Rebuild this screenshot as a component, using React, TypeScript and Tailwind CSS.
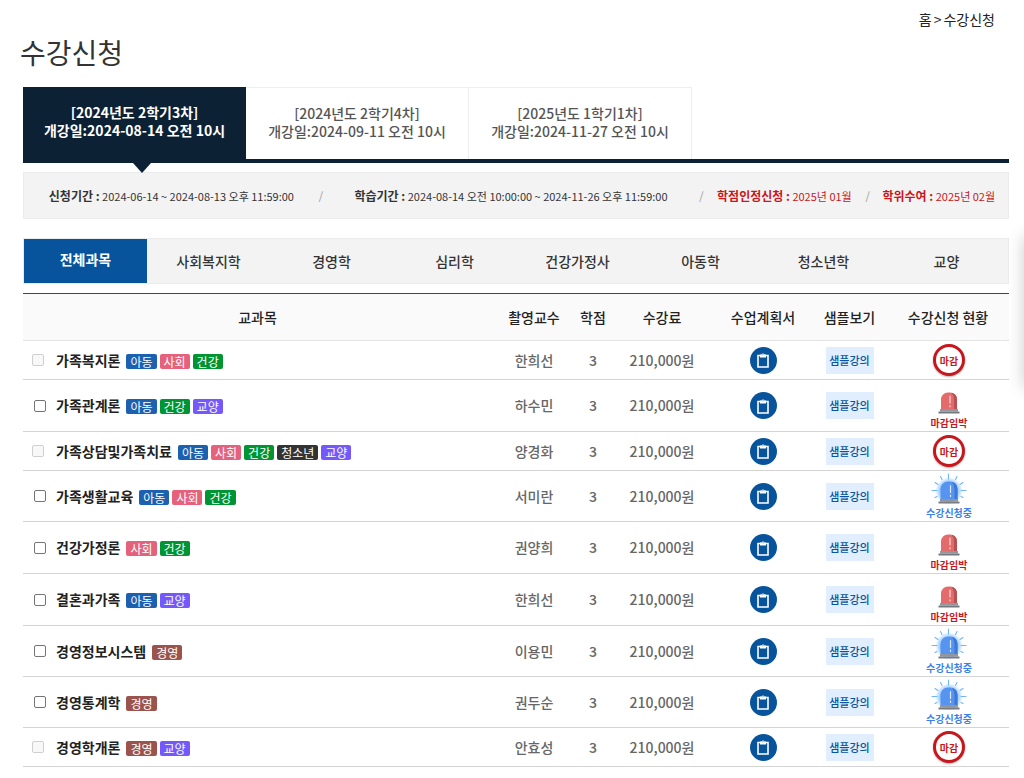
import { useState } from "react";
import clsx from "clsx";

type Status = "closed" | "closing" | "open";

type Course = {
  name: string;
  tags: string[];
  professor: string;
  status: Status;
};

const TERMS = [
  { title: "[2024년도 2학기3차]", start: "개강일:2024-08-14 오전 10시" },
  { title: "[2024년도 2학기4차]", start: "개강일:2024-09-11 오전 10시" },
  { title: "[2025년도 1학기1차]", start: "개강일:2024-11-27 오전 10시" },
];

const PERIODS = [
  { label: "신청기간 :", value: "2024-06-14 ~ 2024-08-13 오후 11:59:00", red: false },
  { label: "학습기간 :", value: "2024-08-14 오전 10:00:00 ~ 2024-11-26 오후 11:59:00", red: false },
  { label: "학점인정신청 :", value: "2025년 01월", red: true },
  { label: "학위수여 :", value: "2025년 02월", red: true },
];

const CATEGORIES = ["전체과목", "사회복지학", "경영학", "심리학", "건강가정사", "아동학", "청소년학", "교양"];

const TAG_COLORS: Record<string, string> = {
  아동: "bg-[#1c60b0]",
  사회: "bg-[#e5627c]",
  건강: "bg-[#009432]",
  교양: "bg-[#7558fb]",
  청소년: "bg-[#333333]",
  경영: "bg-[#9b544d]",
};

const COURSES: Course[] = [
  { name: "가족복지론", tags: ["아동", "사회", "건강"], professor: "한희선", status: "closed" },
  { name: "가족관계론", tags: ["아동", "건강", "교양"], professor: "하수민", status: "closing" },
  { name: "가족상담및가족치료", tags: ["아동", "사회", "건강", "청소년", "교양"], professor: "양경화", status: "closed" },
  { name: "가족생활교육", tags: ["아동", "사회", "건강"], professor: "서미란", status: "open" },
  { name: "건강가정론", tags: ["사회", "건강"], professor: "권양희", status: "closing" },
  { name: "결혼과가족", tags: ["아동", "교양"], professor: "한희선", status: "closing" },
  { name: "경영정보시스템", tags: ["경영"], professor: "이용민", status: "open" },
  { name: "경영통계학", tags: ["경영"], professor: "권두순", status: "open" },
  { name: "경영학개론", tags: ["경영", "교양"], professor: "안효성", status: "closed" },
];

export default function App() {
  const [term, setTerm] = useState(0);
  const [category, setCategory] = useState(0);

  return (
    <div className="relative overflow-hidden bg-white pr-[15px] pb-[10px] pl-[23px] font-['Noto_Sans_CJK_KR','Noto_Sans',sans-serif] text-[#333333]">
      <nav className="flex h-[33px] items-end justify-end gap-[2px] pr-[14px] text-[14px] leading-[28px] text-[#222222]">
        <a href="#home">홈</a>
        <span>&gt;</span>
        <a href="#apply">수강신청</a>
      </nav>
      <h1 className="-ml-[3px] h-[54px] text-[28px] leading-[38px]">수강신청</h1>

      <div className="flex border-b-4 border-[#0d2135]">
        {TERMS.map((t, i) => (
          <button
            key={t.title}
            type="button"
            onClick={() => setTerm(i)}
            className={clsx(
              "relative flex h-[72px] w-[223px] flex-col items-center justify-center border pb-1 text-[14px] leading-[18px]",
              term === i
                ? "border-[#0d2135] bg-[#0d2135] font-bold text-white"
                : "border-b-0 border-l-0 border-[#eeeeee] font-medium text-[#555555]",
            )}
          >
            <span>{t.title}</span>
            <span>{t.start}</span>
            {term === i && (
              <svg viewBox="0 0 18 10" className="absolute -bottom-[15px] left-[109px] h-[10px] w-[18px]" aria-hidden="true">
                <path d="M0 0h18L9 10z" fill="#0d2135" />
              </svg>
            )}
          </button>
        ))}
      </div>

      <div className="mt-[9px] grid h-[47px] grid-cols-[300fr_382fr_167fr_139fr] items-center border border-[#ebebeb] bg-[#f3f3f3] text-[11px]">
        {PERIODS.map((p, i) => (
          <div key={p.label} className={clsx("flex items-center whitespace-nowrap", p.red ? "text-[#c8161d]" : "text-[#333333]")}>
            <p className="flex-1 text-center">
              <strong className="text-[12px]">{p.label}</strong> {p.value}
            </p>
            {i < PERIODS.length - 1 && <span className="w-1 text-[#999999]">/</span>}
          </div>
        ))}
      </div>

      <div className="mt-[19px] grid h-[46px] grid-cols-8 border border-[#ebebeb] bg-[#f3f3f3] text-[14px]">
        {CATEGORIES.map((c, i) => (
          <button
            key={c}
            type="button"
            onClick={() => setCategory(i)}
            className={category === i ? "bg-[#07549c] pb-1 font-bold text-white" : "font-medium"}
          >
            {c}
          </button>
        ))}
      </div>

      <table className="mt-[9px] w-full table-fixed border-collapse border-t border-[#444444] text-center text-[14px]">
        <thead>
          <tr className="h-[47px] border-b border-[#e5e5e5] bg-[#fafafa] text-[#222222] *:font-medium *:whitespace-nowrap">
            <th>교과목</th>
            <th className="w-[84px]">촬영교수</th>
            <th className="w-[34px]">학점</th>
            <th className="w-[104px]">수강료</th>
            <th className="w-[98px]">수업계획서</th>
            <th className="w-[75px]">샘플보기</th>
            <th className="w-[122px]">수강신청 현황</th>
          </tr>
        </thead>
        <tbody>
          {COURSES.map((c) => (
            <CourseRow key={c.name} course={c} />
          ))}
        </tbody>
      </table>

      <aside className="absolute top-[236px] left-full h-[152px] w-[80px] bg-white shadow-[0_0_16px_rgba(0,0,0,0.2)]" />
    </div>
  );
}

function CourseRow({ course }: { course: Course }) {
  const closed = course.status === "closed";

  return (
    <tr
      className={clsx(
        "border-b border-[#d4d4d4] font-medium text-[#666666]",
        closed ? "h-[39px]" : course.status === "closing" ? "h-[52px]" : "h-[51px]",
      )}
    >
      <td>
        <div className="flex items-center gap-[3px]">
          <label className={clsx("mr-[3px] flex items-center font-bold text-[#222222]", closed ? "gap-3 pl-[9px]" : "gap-[10px] pl-[11px]")}>
            <input
              type="checkbox"
              disabled={closed}
              className="size-3 appearance-none rounded-xs border border-[#767676] bg-white checked:bg-[#07549c] disabled:border-[#d0d0d0] disabled:bg-[#f8f8f8]"
            />
            {course.name}
          </label>
          {course.tags.map((tag) => (
            <span key={tag} className={clsx("mt-[2px] rounded-xs px-1 text-[12px] leading-[15px] font-normal text-white", TAG_COLORS[tag])}>
              {tag}
            </span>
          ))}
        </div>
      </td>
      <td>{course.professor}</td>
      <td>3</td>
      <td>210,000원</td>
      <td>
        <button type="button" aria-label="수업계획서" className="mx-auto flex size-[27px] items-center justify-center rounded-full bg-[#07549c]">
          <ClipboardIcon />
        </button>
      </td>
      <td>
        <button type="button" className="mx-auto block h-[27px] w-12 bg-[#e1eefe] text-[11px] font-medium text-[#07549c]">
          샘플강의
        </button>
      </td>
      <td className="pl-[2px]">
        <StatusMark status={course.status} />
      </td>
    </tr>
  );
}

function StatusMark({ status }: { status: Status }) {
  if (status === "closed") {
    return (
      <span className="mx-auto flex size-8 items-center justify-center rounded-full border-3 border-[#c8161d] bg-white text-[10px] font-bold text-[#c8161d] shadow-[0_1px_2px_rgba(0,0,0,0.3)]">
        마감
      </span>
    );
  }
  if (status === "closing") {
    return (
      <div className="flex flex-col items-center gap-px pt-[9px] text-[10px] leading-[14px] font-bold text-[#c8161d]">
        <SirenIcon />
        마감임박
      </div>
    );
  }
  return (
    <div className="flex flex-col items-center gap-px pt-px text-[10px] leading-[14px] font-bold text-[#3b82e8]">
      <SirenIcon lit />
      수강신청중
    </div>
  );
}

function ClipboardIcon() {
  return (
    <svg viewBox="0 0 14 18" className="h-[18px] w-[14px]" aria-hidden="true">
      <path d="M2 4.500h10v11.500H2z" fill="none" stroke="#fff" strokeWidth="1.600" />
      <path d="M4 3.500h1.600a1.500 1.500 0 0 1 2.800 0H10v3H4z" fill="#fff" />
      <circle cx="7" cy="3.800" r="0.500" fill="#07549c" />
    </svg>
  );
}

function SirenIcon({ lit = false }: { lit?: boolean }) {
  if (lit) {
    return (
      <svg viewBox="0 0 36 32" className="h-8 w-9" aria-hidden="true">
        <defs>
          <radialGradient id="siren-glow">
            <stop offset="0.6" stopColor="#63b0ff" stopOpacity="0.75" />
            <stop offset="0.8" stopColor="#8cc6ff" stopOpacity="0.5" />
            <stop offset="1" stopColor="#b9dcff" stopOpacity="0" />
          </radialGradient>
        </defs>
        <circle cx="18" cy="18" r="14" fill="url(#siren-glow)" />
        <path
          d="M17.500 1v5M1 17.500h5M30 17.500h5M9.500 3.500l1.500 3M26 3.500l-1.500 3M4 9.500l3 2M32 9.500l-3 2M4 24.500l2-1M32 24.500l-2-1"
          stroke="#72b4f8"
          strokeWidth="1.100"
          strokeLinecap="round"
        />
        <path d="M9.500 27V16a7.500 7.500 0 0 1 7.500-7.500h2a7.500 7.500 0 0 1 7.500 7.500v11z" fill="#5794ef" />
        <path d="M21 8.800a7.500 7.500 0 0 1 5.500 7.200v11h-3V16q0-4-2.500-7.200z" fill="#3f77d4" />
        <path d="M19.500 12.500v7M19.500 22v1.500" stroke="#d5e7ff" strokeWidth="1.200" strokeLinecap="round" />
        <path d="M9 26h18v2.500H9z" fill="#91969d" />
        <path d="M7.500 28.500h21v2h-21z" fill="#777b82" />
      </svg>
    );
  }
  return (
    <svg viewBox="0 0 22 24" className="h-6 w-[22px]" aria-hidden="true">
      <path d="M3 18V8.500a7 7 0 0 1 7-7h2a7 7 0 0 1 7 7V18z" fill="#e36b6c" />
      <path d="M13.500 1.700A7 7 0 0 1 19 8.500V18h-3V8.500q0-4-2.500-6.800z" fill="#b75252" />
      <path d="M12 5v7M12 14.800v1" stroke="#ffd9d6" strokeWidth="1.200" strokeLinecap="round" />
      <path d="M2 18h18v2.500H2z" fill="#92979e" />
      <path d="M0.500 20.500h21v2h-21z" fill="#74787f" />
    </svg>
  );
}
